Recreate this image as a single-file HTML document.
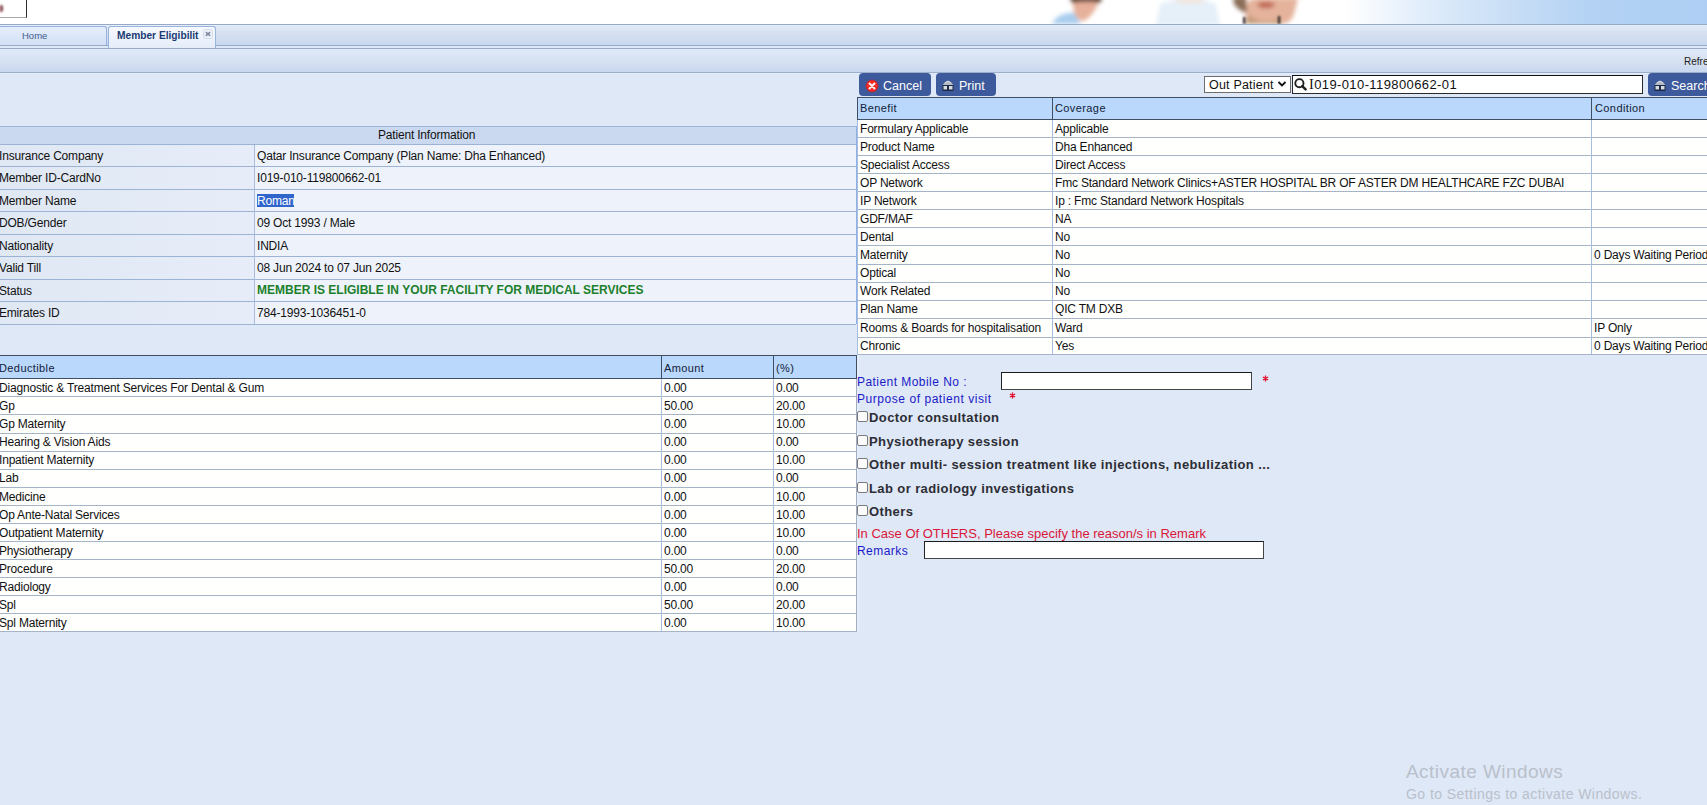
<!DOCTYPE html>
<html><head><meta charset="utf-8"><title>Member Eligibility</title>
<style>
html,body{margin:0;padding:0;}
body{width:1707px;height:805px;overflow:hidden;position:relative;background:#dfe8f6;font-family:'Liberation Sans',sans-serif;color:#000;}
.ab{position:absolute;}
.t{position:absolute;white-space:pre;line-height:1;}
.hl{position:absolute;height:1px;}
.vl{position:absolute;width:1px;}
.b12{font-size:12px;letter-spacing:-0.19px;color:#111;}
.h11{font-size:11px;color:#13213a;letter-spacing:0.4px;margin-top:1px;}
.btn{position:absolute;background:#3d5a9c;border-radius:4px;}
.btnt{position:absolute;color:#fff;font-size:12.5px;white-space:pre;line-height:1;}
.cb{position:absolute;width:9px;height:9px;border:1px solid #7a7a7a;border-radius:2px;background:#fbfbfb;}
.lb{position:absolute;white-space:pre;line-height:1;font-size:13px;font-weight:bold;color:#2d2d35;}
.bl{position:absolute;white-space:pre;line-height:1;font-size:12px;color:#1a1ac8;}
</style></head><body>

<div class="ab" style="left:0;top:0;width:1707px;height:24px;background:linear-gradient(to right,#ffffff 0px,#ffffff 1345px,#e6f0fc 1410px,#d8e8f9 1450px,#c6dcf5 1520px,#b3d2f4 1590px,#aecff3 1707px);"></div>
<svg class="ab" style="left:1030px;top:0" width="300" height="24" viewBox="0 0 300 24">
<defs><filter id="bl1" filterUnits="userSpaceOnUse" x="-20" y="-20" width="340" height="64"><feGaussianBlur stdDeviation="2.3"/></filter>
<filter id="bl2" filterUnits="userSpaceOnUse" x="-20" y="-20" width="340" height="64"><feGaussianBlur stdDeviation="0.8"/></filter></defs>
<g filter="url(#bl1)">
<path d="M22 24 C26 16 34 12 46 13 L50 24 Z" fill="#a9cdee"/>
<path d="M44 -2 L70 -2 L66 8 C62 14 58 20 52 21 C47 20 44 14 43 6 Z" fill="#e6b09a"/>
<path d="M40 -3 L72 -3 L70 3 C60 1 50 2 42 3 Z" fill="#4f2a1c"/>
<path d="M126 26 L130 4 C140 -2 176 -2 186 4 L190 26 Z" fill="#e6f0f9"/>
<ellipse cx="160" cy="0" rx="16" ry="4" fill="#f1e6e0"/>
<path d="M215 24 L216 10 C215 4 220 -2 226 -2 L268 -2 L264 14 C262 20 258 24 250 24 Z" fill="#e5b39c"/>
<path d="M203 -3 L216 -3 L217 13 C213 12 207 9 204 4 Z" fill="#8a6c56"/>
<ellipse cx="236" cy="5" rx="9" ry="3.2" fill="#c06652"/>
<path d="M218 14 C226 22 240 24 250 18 L250 24 L216 24 Z" fill="#c49c78"/>

</g>
<g filter="url(#bl2)">
<rect x="213" y="17" width="2.5" height="7" fill="#3a3034"/>
<rect x="248" y="16" width="2.2" height="8" fill="#2a2226"/>
</g></svg>
<div class="ab" style="left:0;top:0;width:26px;height:17px;background:#fff;border-right:1px solid #2a2a2a;border-bottom:1px solid #a8a8a8;"></div>
<div class="ab" style="left:0;top:5px;width:3px;height:7px;background:#84404c;border-radius:0 2px 2px 0;filter:blur(0.9px);"></div>
<div class="ab" style="left:0;top:24px;width:1707px;height:24px;background:linear-gradient(#e0eafa 0px,#dde7f7 5px,#d8e1f0 7px,#cddbf0 18px,#c9d9f1 21px);"></div>
<div class="hl" style="left:0;top:24px;width:1707px;background:#98a9c6;"></div>
<div class="hl" style="left:0;top:25px;width:1707px;background:#e6eefb;"></div>
<div class="hl" style="left:0;top:45px;width:1707px;background:#98a9c8;"></div>
<div class="ab" style="left:0;top:46px;width:1707px;height:2px;background:#dde8f9;"></div>
<div class="ab" style="left:-2px;top:26px;width:107px;height:18px;border:1px solid #98b4dc;border-bottom:none;border-radius:3px 3px 0 0;background:linear-gradient(#e6eefc,#d2e0f5);"></div>
<div class="t" style="left:22px;top:31px;font-size:9.5px;color:#3e5b8e;">Home</div>
<div class="ab" style="left:108px;top:26px;width:106px;height:22px;border:1px solid #98b4dc;border-bottom:none;border-radius:3px 3px 0 0;background:linear-gradient(#f6f9fe,#e4ecf9);"></div>
<div class="t" style="left:117px;top:31px;font-size:10.2px;font-weight:bold;color:#1c3b72;">Member Eligibilit</div>
<svg class="ab" style="left:203px;top:29px" width="10" height="10" viewBox="0 0 10 10"><rect x="0.5" y="0.5" width="9" height="9" rx="2" fill="#eef3fb" stroke="#d3dbe8"/><path d="M2.8 3.2 L7.2 6.8 M7.2 3.2 L2.8 6.8" stroke="#7f8aa0" stroke-width="1.6"/></svg>
<div class="hl" style="left:0;top:48px;width:1707px;background:#9aabc8;"></div>
<div class="ab" style="left:0;top:49px;width:1707px;height:23px;background:linear-gradient(#dfeafb,#d8e2f1 45%,#c9d8ef);"></div>
<div class="hl" style="left:0;top:72px;width:1707px;background:#9eafcc;"></div>
<div class="hl" style="left:0;top:73px;width:1707px;background:#e3ecfb;"></div>
<div class="t" style="left:1684px;top:57px;font-size:10px;color:#222;">Refresh</div>
<div class="ab" style="left:0;top:126px;width:856px;height:18px;background:#cbd9f0;"></div>
<div class="hl" style="left:0;top:126px;width:856px;background:#9fb3d6;"></div>
<div class="t b12" style="left:378px;top:129px;">Patient Information</div>
<div class="ab" style="left:0;top:145px;width:254px;height:21px;background:linear-gradient(to right,#e0e8f4,#e6edf8);"></div>
<div class="ab" style="left:255px;top:145px;width:601px;height:21px;background:#eef3fb;"></div>
<div class="t b12" style="left:-1px;top:150px;">Insurance Company</div>
<div class="t b12" style="left:257px;top:150px;">Qatar Insurance Company (Plan Name: Dha Enhanced)</div>
<div class="ab" style="left:0;top:167px;width:254px;height:22px;background:linear-gradient(to right,#e0e8f4,#e6edf8);"></div>
<div class="ab" style="left:255px;top:167px;width:601px;height:22px;background:#eef3fb;"></div>
<div class="t b12" style="left:-1px;top:172px;">Member ID-CardNo</div>
<div class="t b12" style="left:257px;top:172px;">I019-010-119800662-01</div>
<div class="ab" style="left:0;top:190px;width:254px;height:21px;background:linear-gradient(to right,#e0e8f4,#e6edf8);"></div>
<div class="ab" style="left:255px;top:190px;width:601px;height:21px;background:#eef3fb;"></div>
<div class="t b12" style="left:-1px;top:195px;">Member Name</div>
<div class="ab" style="left:257px;top:194px;width:37px;height:13px;background:#3066cc;"></div>
<div class="t b12" style="left:257px;top:195px;color:#fff;">Roman</div>
<div class="ab" style="left:0;top:212px;width:254px;height:22px;background:linear-gradient(to right,#e0e8f4,#e6edf8);"></div>
<div class="ab" style="left:255px;top:212px;width:601px;height:22px;background:#eef3fb;"></div>
<div class="t b12" style="left:-1px;top:217px;">DOB/Gender</div>
<div class="t b12" style="left:257px;top:217px;">09 Oct 1993 / Male</div>
<div class="ab" style="left:0;top:235px;width:254px;height:21px;background:linear-gradient(to right,#e0e8f4,#e6edf8);"></div>
<div class="ab" style="left:255px;top:235px;width:601px;height:21px;background:#eef3fb;"></div>
<div class="t b12" style="left:-1px;top:240px;">Nationality</div>
<div class="t b12" style="left:257px;top:240px;">INDIA</div>
<div class="ab" style="left:0;top:257px;width:254px;height:22px;background:linear-gradient(to right,#e0e8f4,#e6edf8);"></div>
<div class="ab" style="left:255px;top:257px;width:601px;height:22px;background:#eef3fb;"></div>
<div class="t b12" style="left:-1px;top:262px;">Valid Till</div>
<div class="t b12" style="left:257px;top:262px;">08 Jun 2024 to 07 Jun 2025</div>
<div class="ab" style="left:0;top:280px;width:254px;height:21px;background:linear-gradient(to right,#e0e8f4,#e6edf8);"></div>
<div class="ab" style="left:255px;top:280px;width:601px;height:21px;background:#eef3fb;"></div>
<div class="t b12" style="left:-1px;top:285px;">Status</div>
<div class="t" style="left:257px;top:284px;font-size:12px;font-weight:bold;color:#1d7f2c;">MEMBER IS ELIGIBLE IN YOUR FACILITY FOR MEDICAL SERVICES</div>
<div class="ab" style="left:0;top:302px;width:254px;height:22px;background:linear-gradient(to right,#e0e8f4,#e6edf8);"></div>
<div class="ab" style="left:255px;top:302px;width:601px;height:22px;background:#eef3fb;"></div>
<div class="t b12" style="left:-1px;top:307px;">Emirates ID</div>
<div class="t b12" style="left:257px;top:307px;">784-1993-1036451-0</div>
<div class="hl" style="left:0;top:144px;width:856px;background:#9db3d6;"></div>
<div class="hl" style="left:0;top:166px;width:856px;background:#9db3d6;"></div>
<div class="hl" style="left:0;top:189px;width:856px;background:#9db3d6;"></div>
<div class="hl" style="left:0;top:211px;width:856px;background:#9db3d6;"></div>
<div class="hl" style="left:0;top:234px;width:856px;background:#9db3d6;"></div>
<div class="hl" style="left:0;top:256px;width:856px;background:#9db3d6;"></div>
<div class="hl" style="left:0;top:279px;width:856px;background:#9db3d6;"></div>
<div class="hl" style="left:0;top:301px;width:856px;background:#9db3d6;"></div>
<div class="hl" style="left:0;top:324px;width:856px;background:#9db3d6;"></div>
<div class="vl" style="left:254px;top:145px;height:179px;background:#a7bde0;"></div>
<div class="ab" style="left:856px;top:126px;width:2px;height:198px;background:#8fb1e6;"></div>
<div class="ab" style="left:0;top:356px;width:856px;height:22px;background:#b9d8fb;"></div>
<div class="hl" style="left:0;top:355px;width:857px;background:#3f4e63;"></div>
<div class="hl" style="left:0;top:378px;width:857px;background:#3f4e63;"></div>
<div class="vl" style="left:661px;top:355px;height:23px;background:#3f4e63;"></div>
<div class="vl" style="left:773px;top:355px;height:23px;background:#3f4e63;"></div>
<div class="vl" style="left:856px;top:355px;height:23px;background:#3f4e63;"></div>
<div class="t h11" style="left:-1px;top:362px;">Deductible</div>
<div class="t h11" style="left:664px;top:362px;">Amount</div>
<div class="t h11" style="left:776px;top:362px;">(%)</div>
<div class="ab" style="left:0;top:379px;width:856px;height:252px;background:#fffffe;"></div>
<div class="t b12" style="left:-1px;top:382px;">Diagnostic &amp; Treatment Services For Dental &amp; Gum</div>
<div class="t b12" style="left:664px;top:382px;">0.00</div>
<div class="t b12" style="left:776px;top:382px;">0.00</div>
<div class="hl" style="left:0;top:396px;width:857px;background:#a6b4ca;"></div>
<div class="t b12" style="left:-1px;top:400px;">Gp</div>
<div class="t b12" style="left:664px;top:400px;">50.00</div>
<div class="t b12" style="left:776px;top:400px;">20.00</div>
<div class="hl" style="left:0;top:414px;width:857px;background:#a6b4ca;"></div>
<div class="t b12" style="left:-1px;top:418px;">Gp Maternity</div>
<div class="t b12" style="left:664px;top:418px;">0.00</div>
<div class="t b12" style="left:776px;top:418px;">10.00</div>
<div class="hl" style="left:0;top:433px;width:857px;background:#a6b4ca;"></div>
<div class="t b12" style="left:-1px;top:436px;">Hearing &amp; Vision Aids</div>
<div class="t b12" style="left:664px;top:436px;">0.00</div>
<div class="t b12" style="left:776px;top:436px;">0.00</div>
<div class="hl" style="left:0;top:451px;width:857px;background:#a6b4ca;"></div>
<div class="t b12" style="left:-1px;top:454px;">Inpatient Maternity</div>
<div class="t b12" style="left:664px;top:454px;">0.00</div>
<div class="t b12" style="left:776px;top:454px;">10.00</div>
<div class="hl" style="left:0;top:469px;width:857px;background:#a6b4ca;"></div>
<div class="t b12" style="left:-1px;top:472px;">Lab</div>
<div class="t b12" style="left:664px;top:472px;">0.00</div>
<div class="t b12" style="left:776px;top:472px;">0.00</div>
<div class="hl" style="left:0;top:487px;width:857px;background:#a6b4ca;"></div>
<div class="t b12" style="left:-1px;top:491px;">Medicine</div>
<div class="t b12" style="left:664px;top:491px;">0.00</div>
<div class="t b12" style="left:776px;top:491px;">10.00</div>
<div class="hl" style="left:0;top:505px;width:857px;background:#a6b4ca;"></div>
<div class="t b12" style="left:-1px;top:509px;">Op Ante-Natal Services</div>
<div class="t b12" style="left:664px;top:509px;">0.00</div>
<div class="t b12" style="left:776px;top:509px;">10.00</div>
<div class="hl" style="left:0;top:523px;width:857px;background:#a6b4ca;"></div>
<div class="t b12" style="left:-1px;top:527px;">Outpatient Maternity</div>
<div class="t b12" style="left:664px;top:527px;">0.00</div>
<div class="t b12" style="left:776px;top:527px;">10.00</div>
<div class="hl" style="left:0;top:541px;width:857px;background:#a6b4ca;"></div>
<div class="t b12" style="left:-1px;top:545px;">Physiotherapy</div>
<div class="t b12" style="left:664px;top:545px;">0.00</div>
<div class="t b12" style="left:776px;top:545px;">0.00</div>
<div class="hl" style="left:0;top:559px;width:857px;background:#a6b4ca;"></div>
<div class="t b12" style="left:-1px;top:563px;">Procedure</div>
<div class="t b12" style="left:664px;top:563px;">50.00</div>
<div class="t b12" style="left:776px;top:563px;">20.00</div>
<div class="hl" style="left:0;top:577px;width:857px;background:#a6b4ca;"></div>
<div class="t b12" style="left:-1px;top:581px;">Radiology</div>
<div class="t b12" style="left:664px;top:581px;">0.00</div>
<div class="t b12" style="left:776px;top:581px;">0.00</div>
<div class="hl" style="left:0;top:595px;width:857px;background:#a6b4ca;"></div>
<div class="t b12" style="left:-1px;top:599px;">Spl</div>
<div class="t b12" style="left:664px;top:599px;">50.00</div>
<div class="t b12" style="left:776px;top:599px;">20.00</div>
<div class="hl" style="left:0;top:613px;width:857px;background:#a6b4ca;"></div>
<div class="t b12" style="left:-1px;top:617px;">Spl Maternity</div>
<div class="t b12" style="left:664px;top:617px;">0.00</div>
<div class="t b12" style="left:776px;top:617px;">10.00</div>
<div class="hl" style="left:0;top:631px;width:857px;background:#a6b4ca;"></div>
<div class="vl" style="left:661px;top:379px;height:252px;background:#a7bde0;"></div>
<div class="vl" style="left:773px;top:379px;height:252px;background:#a7bde0;"></div>
<div class="vl" style="left:856px;top:379px;height:252px;background:#a0acbf;"></div>
<div class="ab" style="left:857px;top:355px;width:2px;height:276px;background:#e4eefb;"></div>
<div class="btn" style="left:859px;top:73px;width:72px;height:23px;"></div>
<svg class="ab" style="left:865px;top:79px" width="14" height="14" viewBox="0 0 14 14"><circle cx="7" cy="7" r="5.9" fill="#f22c28" stroke="#c81a1e" stroke-width="0.7"/><path d="M4.5 4.5 L9.5 9.5 M9.5 4.5 L4.5 9.5" stroke="#fff3f3" stroke-width="1.9" stroke-linecap="round"/></svg>
<div class="btnt" style="left:883px;top:80px;">Cancel</div>
<div class="btn" style="left:936px;top:73px;width:60px;height:23px;"></div>
<svg class="ab" style="left:942px;top:80px" width="12" height="11" viewBox="0 0 12 11"><path d="M0.5 5.5 L2.5 2.5 L6 0.5 L9.5 2.5 L11.5 5.5 Z" fill="#b3bac6"/><path d="M3 3 L6 1.2 L9 3" stroke="#e4e8ee" stroke-width="0.8" fill="none"/><rect x="0.5" y="5" width="11" height="6" fill="#1d2a44"/><rect x="1.5" y="6" width="3.5" height="3.5" fill="#d6dbe4"/><rect x="7" y="6" width="3.5" height="3.5" fill="#d6dbe4"/></svg>
<div class="btnt" style="left:959px;top:80px;">Print</div>
<div class="btn" style="left:1648px;top:73px;width:70px;height:23px;"></div>
<svg class="ab" style="left:1654px;top:80px" width="12" height="11" viewBox="0 0 12 11"><path d="M0.5 5.5 L2.5 2.5 L6 0.5 L9.5 2.5 L11.5 5.5 Z" fill="#b3bac6"/><path d="M3 3 L6 1.2 L9 3" stroke="#e4e8ee" stroke-width="0.8" fill="none"/><rect x="0.5" y="5" width="11" height="6" fill="#1d2a44"/><rect x="1.5" y="6" width="3.5" height="3.5" fill="#d6dbe4"/><rect x="7" y="6" width="3.5" height="3.5" fill="#d6dbe4"/></svg>
<div class="btnt" style="left:1671px;top:80px;">Search</div>
<div class="ab" style="left:1204px;top:76px;width:85px;height:15px;border:1px solid #6d6d6d;background:#fff;"></div>
<div class="t" style="left:1209px;top:79px;font-size:12.5px;color:#111;letter-spacing:0.2px;">Out Patient</div>
<svg class="ab" style="left:1277px;top:80px" width="10" height="8" viewBox="0 0 10 8"><path d="M1.5 2 L5 5.5 L8.5 2" fill="none" stroke="#111" stroke-width="1.8"/></svg>
<div class="ab" style="left:1292px;top:75px;width:349px;height:17px;border:1px solid #2a2a2a;border-top-color:#111;background:#fff;"></div>
<svg class="ab" style="left:1294px;top:78px" width="13" height="13" viewBox="0 0 13 13"><circle cx="5.4" cy="5.2" r="4.1" fill="none" stroke="#1e1e1e" stroke-width="1.9"/><path d="M8.3 8.2 L11.6 11.4" stroke="#1e1e1e" stroke-width="2.4" stroke-linecap="round"/></svg>
<div class="t" style="left:1309px;top:77px;font-size:13px;color:#111;letter-spacing:0.4px;"><span style="font-family:'Liberation Serif',serif;font-size:14.2px">I</span>019-010-119800662-01</div>
<div class="ab" style="left:858px;top:98px;width:849px;height:21px;background:#b9d8fb;"></div>
<div class="hl" style="left:857px;top:97px;width:850px;background:#3f4e63;"></div>
<div class="hl" style="left:857px;top:119px;width:850px;background:#3f4e63;"></div>
<div class="vl" style="left:857px;top:97px;height:23px;background:#3f4e63;"></div>
<div class="vl" style="left:1052px;top:97px;height:23px;background:#3f4e63;"></div>
<div class="vl" style="left:1591px;top:97px;height:23px;background:#3f4e63;"></div>
<div class="t h11" style="left:860px;top:102px;">Benefit</div>
<div class="t h11" style="left:1055px;top:102px;">Coverage</div>
<div class="t h11" style="left:1595px;top:102px;">Condition</div>
<div class="ab" style="left:858px;top:120px;width:849px;height:234px;background:#fffffe;"></div>
<div class="t b12" style="left:860px;top:123px;">Formulary Applicable</div>
<div class="t b12" style="left:1055px;top:123px;">Applicable</div>
<div class="hl" style="left:857px;top:137px;width:850px;background:#a6b4ca;"></div>
<div class="t b12" style="left:860px;top:141px;">Product Name</div>
<div class="t b12" style="left:1055px;top:141px;">Dha Enhanced</div>
<div class="hl" style="left:857px;top:155px;width:850px;background:#a6b4ca;"></div>
<div class="t b12" style="left:860px;top:159px;">Specialist Access</div>
<div class="t b12" style="left:1055px;top:159px;">Direct Access</div>
<div class="hl" style="left:857px;top:173px;width:850px;background:#a6b4ca;"></div>
<div class="t b12" style="left:860px;top:177px;">OP Network</div>
<div class="t b12" style="left:1055px;top:177px;">Fmc Standard Network Clinics+ASTER HOSPITAL BR OF ASTER DM HEALTHCARE FZC DUBAI</div>
<div class="hl" style="left:857px;top:191px;width:850px;background:#a6b4ca;"></div>
<div class="t b12" style="left:860px;top:195px;">IP Network</div>
<div class="t b12" style="left:1055px;top:195px;">Ip : Fmc Standard Network Hospitals</div>
<div class="hl" style="left:857px;top:209px;width:850px;background:#a6b4ca;"></div>
<div class="t b12" style="left:860px;top:213px;">GDF/MAF</div>
<div class="t b12" style="left:1055px;top:213px;">NA</div>
<div class="hl" style="left:857px;top:227px;width:850px;background:#a6b4ca;"></div>
<div class="t b12" style="left:860px;top:231px;">Dental</div>
<div class="t b12" style="left:1055px;top:231px;">No</div>
<div class="hl" style="left:857px;top:245px;width:850px;background:#a6b4ca;"></div>
<div class="t b12" style="left:860px;top:249px;">Maternity</div>
<div class="t b12" style="left:1055px;top:249px;">No</div>
<div class="t b12" style="left:1594px;top:249px;">0 Days Waiting Period</div>
<div class="hl" style="left:857px;top:264px;width:850px;background:#a6b4ca;"></div>
<div class="t b12" style="left:860px;top:267px;">Optical</div>
<div class="t b12" style="left:1055px;top:267px;">No</div>
<div class="hl" style="left:857px;top:282px;width:850px;background:#a6b4ca;"></div>
<div class="t b12" style="left:860px;top:285px;">Work Related</div>
<div class="t b12" style="left:1055px;top:285px;">No</div>
<div class="hl" style="left:857px;top:300px;width:850px;background:#a6b4ca;"></div>
<div class="t b12" style="left:860px;top:303px;">Plan Name</div>
<div class="t b12" style="left:1055px;top:303px;">QIC TM DXB</div>
<div class="hl" style="left:857px;top:318px;width:850px;background:#a6b4ca;"></div>
<div class="t b12" style="left:860px;top:322px;">Rooms &amp; Boards for hospitalisation</div>
<div class="t b12" style="left:1055px;top:322px;">Ward</div>
<div class="t b12" style="left:1594px;top:322px;">IP Only</div>
<div class="hl" style="left:857px;top:337px;width:850px;background:#a6b4ca;"></div>
<div class="t b12" style="left:860px;top:340px;">Chronic</div>
<div class="t b12" style="left:1055px;top:340px;">Yes</div>
<div class="t b12" style="left:1594px;top:340px;">0 Days Waiting Period</div>
<div class="hl" style="left:857px;top:354px;width:850px;background:#a6b4ca;"></div>
<div class="vl" style="left:857px;top:120px;height:235px;background:#a7bde0;"></div>
<div class="vl" style="left:1052px;top:120px;height:234px;background:#a7bde0;"></div>
<div class="vl" style="left:1591px;top:120px;height:234px;background:#a7bde0;"></div>
<div class="bl" style="left:857px;top:376px;letter-spacing:0.45px;">Patient Mobile No :</div>
<div class="ab" style="left:1001px;top:372px;width:249px;height:16px;border:1px solid #444;border-top-color:#1a1a1a;border-left-color:#222;background:#fff;"></div>
<svg class="ab" style="left:1262px;top:375px" width="7" height="7" viewBox="0 0 7 7"><path d="M3.5 0.5 V6.5 M0.9 2 L6.1 5 M6.1 2 L0.9 5" stroke="#e0102e" stroke-width="1.3"/></svg>
<div class="bl" style="left:857px;top:393px;letter-spacing:0.55px;">Purpose of patient visit</div>
<svg class="ab" style="left:1009px;top:392px" width="7" height="7" viewBox="0 0 7 7"><path d="M3.5 0.5 V6.5 M0.9 2 L6.1 5 M6.1 2 L0.9 5" stroke="#e0102e" stroke-width="1.3"/></svg>
<div class="cb" style="left:857px;top:411px;"></div>
<div class="lb" style="left:869px;top:411px;letter-spacing:0.4px;">Doctor consultation</div>
<div class="cb" style="left:857px;top:435px;"></div>
<div class="lb" style="left:869px;top:435px;letter-spacing:0.4px;">Physiotherapy session</div>
<div class="cb" style="left:857px;top:458px;"></div>
<div class="lb" style="left:869px;top:458px;letter-spacing:0.4px;">Other multi- session treatment like injections, nebulization ...</div>
<div class="cb" style="left:857px;top:482px;"></div>
<div class="lb" style="left:869px;top:482px;letter-spacing:0.4px;">Lab or radiology investigations</div>
<div class="cb" style="left:857px;top:505px;"></div>
<div class="lb" style="left:869px;top:505px;letter-spacing:0.4px;">Others</div>
<div class="t" style="left:857px;top:527px;font-size:13px;color:#d9173a;">In Case Of OTHERS, Please specify the reason/s in Remark</div>
<div class="bl" style="left:857px;top:545px;letter-spacing:0.45px;">Remarks</div>
<div class="ab" style="left:924px;top:541px;width:338px;height:16px;border:1px solid #444;border-top-color:#1a1a1a;border-left-color:#222;background:#fff;"></div>
<div class="t" style="left:1406px;top:762px;font-size:19px;color:#b9c0cb;letter-spacing:0.45px;">Activate Windows</div>
<div class="t" style="left:1406px;top:787px;font-size:14px;color:#b9c0cb;letter-spacing:0.44px;">Go to Settings to activate Windows.</div>
</body></html>
